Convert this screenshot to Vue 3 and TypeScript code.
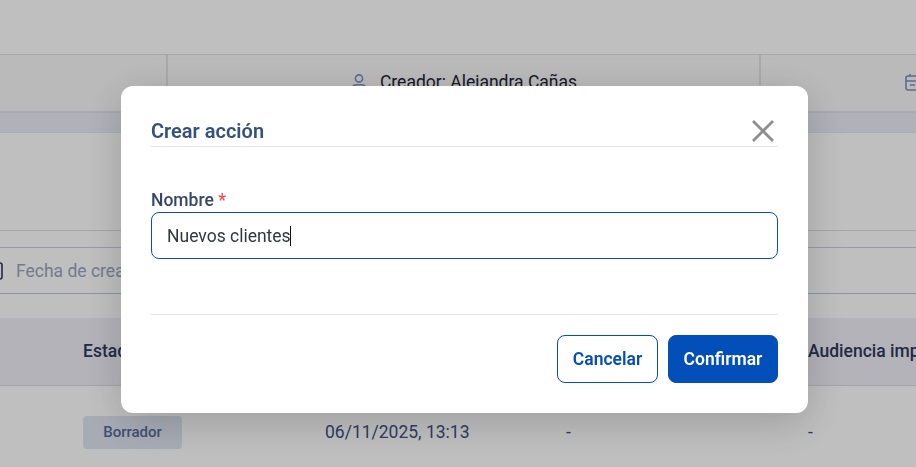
<script setup lang="ts">
const title = 'Crear acción'
const fieldValue = 'Nuevos clientes'
</script>

<template>
  <div class="page">
    <div class="top"></div>
    <div class="info">
      <div class="info-cell first"></div>
      <div class="info-cell mid">
        <svg class="ico" width="16" height="18" viewBox="0 0 16 18" fill="none" stroke="currentColor" stroke-width="1.6">
          <circle cx="8" cy="5.5" r="3.6" />
          <path d="M1.5 16.5v-1.2c0-2.2 1.8-3.6 4-3.6h5c2.2 0 4 1.4 4 3.6v1.2z" />
        </svg>
        <span>Creador: Alejandra Cañas</span>
      </div>
      <div class="info-cell last">
        <svg class="ico" width="18" height="18" viewBox="0 0 18 18" fill="none" stroke="currentColor" stroke-width="1.6">
          <rect x="1" y="3" width="16" height="14" rx="2" />
          <path d="M1 8h16M5 1v3M13 1v3M5 12h5" />
        </svg>
      </div>
    </div>
    <div class="band"></div>
    <div class="blank"></div>
    <div class="filter">
      <div class="filter-box">
        <svg class="cal" width="18" height="18" viewBox="0 0 18 18" fill="none" stroke="currentColor" stroke-width="1.6">
          <rect x="1" y="1" width="16" height="16" rx="2" />
        </svg>
        <span>Fecha de creación</span>
      </div>
    </div>
    <div class="thead">
      <div></div>
      <div class="th">Estado</div>
      <div class="th"></div>
      <div class="th"></div>
      <div class="th nowrap">Audiencia impactada</div>
    </div>
    <div class="trow">
      <div></div>
      <div class="badge-cell"><span class="badge">Borrador</span></div>
      <div>06/11/2025, 13:13</div>
      <div>-</div>
      <div>-</div>
    </div>
  </div>

  <div class="overlay">
    <div class="modal">
      <header class="modal-head">
        <h2>{{ title }}</h2>
        <svg class="close" width="24" height="24" viewBox="0 0 24 24" fill="none" stroke="#8e8e8e" stroke-width="2.8">
          <path d="M2 2l20 20M22 2L2 22" />
        </svg>
      </header>
      <div class="modal-body">
        <label class="label">Nombre <em>*</em></label>
        <div class="input"><span>{{ fieldValue }}</span><i class="caret"></i></div>
      </div>
      <footer class="modal-foot">
        <button class="btn ghost">Cancelar</button>
        <button class="btn solid">Confirmar</button>
      </footer>
    </div>
  </div>
</template>

<style>
html, body { margin: 0; height: 100%; overflow: hidden; background: #fff; }
</style>

<style scoped>
.page {
  width: 916px;
  height: 467px;
  overflow: hidden;
  font-family: Roboto, "Liberation Sans", sans-serif;
  font-size: 17.5px;
  color: #2c3a5c;
  background: #fff;
}
.top { height: 54px; border-bottom: 1px solid #dcdee2; box-sizing: content-box; }
.info {
  display: grid;
  grid-template-columns: 168px 593px 155px;
  height: 58px;
  background: #f8f8f8;
  border-bottom: 2px solid #e2e2e8;
  box-sizing: border-box;
}
.info-cell {
  display: flex;
  align-items: center;
  border-right: 2px solid #e0e2e7;
  gap: 13px;
  color: #1c2433;
}
.info-cell.mid { justify-content: center; padding-left: 1px; padding-bottom: 2px; }
.info-cell.last { border-right: 0; padding-left: 144px; padding-bottom: 2px; }
.ico { color: #7e8fbb; flex: none; }
.band { height: 20px; background: #ecedf6; border-bottom: 1px solid #e6e7ef; box-sizing: border-box; }
.blank { height: 98px; border-bottom: 1px solid #dcdee2; box-sizing: border-box; }
.filter { height: 87px; padding-top: 16px; box-sizing: border-box; }
.filter-box {
  display: flex;
  align-items: center;
  height: 47px;
  box-sizing: border-box;
  gap: 13px;
  margin-left: -9px;
  border-top: 1px solid #c9d2e1;
  border-bottom: 1px solid #b9c4d8;
  color: #9aa5bb;
  white-space: nowrap;
}
.cal { color: #2c3a5c; flex: none; margin-left: -6px; }
.thead, .trow {
  display: grid;
  grid-template-columns: 83px 242px 241px 242px 108px;
}
.thead {
  height: 68px;
  align-items: center;
  background: #f1eff8;
  border-bottom: 1px solid #dddde2;
  box-sizing: border-box;
  padding-bottom: 2px;
}
.th { font-weight: 500; color: #2c3a5c; white-space: nowrap; }
.nowrap { overflow: hidden; }
.trow { height: 92px; align-items: center; color: #3e5282; }
.trow > div { white-space: nowrap; }
.badge-cell { display: flex; }
.badge {
  display: inline-flex;
  align-items: center;
  justify-content: center;
  width: 99px;
  height: 33px;
  border-radius: 4px;
  background: #dfe5f2;
  color: #566b98;
  font-size: 15px;
  font-weight: 500;
}
.overlay {
  position: fixed;
  inset: 0;
  background: rgba(0, 0, 0, 0.25);
}
.modal {
  position: absolute;
  left: 121px;
  top: 86px;
  width: 687px;
  box-sizing: border-box;
  padding: 30px;
  background: #fff;
  border-radius: 12px;
  box-shadow: 0 10px 40px rgba(0, 0, 0, 0.18);
  font-family: Roboto, "Liberation Sans", sans-serif;
}
.modal-head {
  display: flex;
  align-items: center;
  justify-content: space-between;
  height: 31px;
  box-sizing: border-box;
  border-bottom: 1px solid #e5e5e7;
}
.modal-head h2 {
  margin: 0;
  font-size: 20px;
  font-weight: 600;
  color: #34507c;
}
.close { margin-right: 3px; }
.modal-body { padding-top: 42px; padding-bottom: 55px; border-bottom: 1px solid #e5e5e7; }
.label {
  display: block;
  height: 23px;
  line-height: 23px;
  font-size: 17.5px;
  font-weight: 500;
  color: #36466c;
}
.label em { font-style: normal; color: #f04a4f; }
.input {
  display: flex;
  align-items: center;
  height: 47px;
  box-sizing: border-box;
  padding-left: 15px;
  border: 1px solid #0a50b4;
  border-radius: 8px;
  font-size: 17.5px;
  color: #33363d;
}
.caret { width: 1px; height: 20px; background: #111; margin-left: -1px; }
.modal-foot {
  display: flex;
  justify-content: flex-end;
  gap: 10px;
  padding-top: 20px;
}
.btn {
  height: 48px;
  box-sizing: border-box;
  border-radius: 8px;
  font-family: inherit;
  font-size: 17.5px;
  font-weight: 600;
  padding: 0;
}
.ghost { width: 101px; background: #fff; border: 1px solid #034fb9; color: #034fb9; }
.solid { width: 110px; background: #034fb9; border: 1px solid #034fb9; color: #fff; }
</style>
